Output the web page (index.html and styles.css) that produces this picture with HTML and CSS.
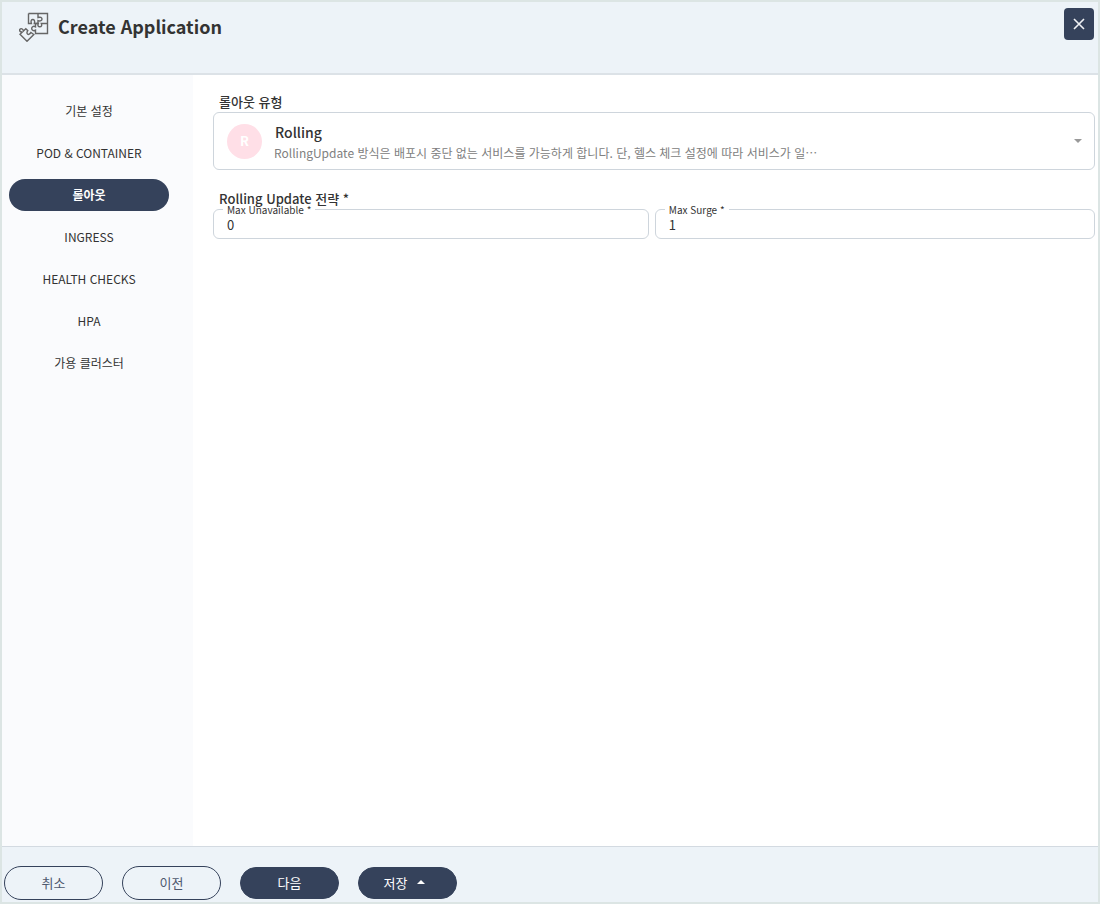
FILE: index.html
```html
<!DOCTYPE html>
<html lang="ko">
<head>
    <meta charset="UTF-8">
    <meta name="viewport" content="width=device-width, initial-scale=1">
    <title>Create Application</title>
    <link rel="stylesheet" href="styles.css">
</head>
<body>
<div class="dialog">
    <header class="dialog-header">
        <svg class="app-icon" viewBox="0 0 30 30" aria-hidden="true">
            <path d="M9.500 1.500H28.500V21.500H16.500V18.200C14.500 19.300 12.700 18.300 12.700 16.500S14.500 13.700 16.500 14.800V11.500H19.300C18.300 13.500 19.200 14.800 20.800 14.800S23.300 13.500 22.300 11.500H28.500"/>
            <path d="M9.500 1.500V11.500H12.400C11.500 9 12.400 7.500 13.800 7.500S16.200 9 15.300 11.500H19V8.600C21.400 9.500 23 8.500 23 7S21.400 4.700 19 5.500V1.500"/>
            <path d="M8 29.300L1 22.300L3.200 20.200C.8 19.800 0 18.400 1 17.200S4 16.700 4.400 19L6.800 16.700L8.800 18.700C7.600 20.400 7.800 21.500 8.700 22.200S10.700 22.100 11.900 20.500L14.800 22.500Z"/>
        </svg>
        <h1>Create Application</h1>
        <button type="button" class="close-btn" aria-label="Close">
            <svg viewBox="0 0 12 12" aria-hidden="true"><path d="M1 1L11 11M11 1L1 11"/></svg>
        </button>
    </header>

    <div class="dialog-body">
        <nav class="side-nav">
            <a href="#">기본 설정</a>
            <a href="#">POD &amp; CONTAINER</a>
            <a href="#" class="selected">롤아웃</a>
            <a href="#">INGRESS</a>
            <a href="#">HEALTH CHECKS</a>
            <a href="#">HPA</a>
            <a href="#">가용 클러스터</a>
        </nav>

        <main class="content">
            <label class="section-title" for="rollout-type">롤아웃 유형</label>
            <div class="type-box">
                <select id="rollout-type">
                    <option>Rolling</option>
                </select>
                <div class="type-info">
                    <span class="avatar">R</span>
                    <p>RollingUpdate 방식은 배포시 중단 없는 서비스를 가능하게 합니다. 단, 헬스 체크 설정에 따라 서비스가 일…</p>
                    <svg class="caret" viewBox="0 0 8 4" aria-hidden="true"><path d="M0 0H8L4 4Z"/></svg>
                </div>
            </div>

            <h2 class="section-title">Rolling Update 전략 *</h2>
            <div class="field-row">
                <div class="field">
                    <label for="max-unavailable">Max Unavailable *</label>
                    <input type="text" id="max-unavailable" value="0">
                </div>
                <div class="field">
                    <label for="max-surge">Max Surge *</label>
                    <input type="text" id="max-surge" value="1">
                </div>
            </div>
        </main>
    </div>

    <footer class="dialog-footer">
        <button type="button" class="btn">취소</button>
        <button type="button" class="btn">이전</button>
        <button type="button" class="btn btn-fill">다음</button>
        <button type="button" class="btn btn-fill btn-menu">저장
            <svg class="caret" viewBox="0 0 8 4" aria-hidden="true"><path d="M0 4H8L4 0Z"/></svg>
        </button>
    </footer>
</div>
</body>
</html>
```

FILE: styles.css
```css
*{
    margin: 0;
    padding: 0;
    box-sizing: border-box;
}
body{
    font-family: "Noto Sans CJK KR", sans-serif;
    font-size: 12px;
    color: #333;
    background: #fff;
}
button, input, select{
    font-family: inherit;
    color: inherit;
}
a{
    color: inherit;
    text-decoration: none;
}
.dialog{
    display: flex;
    flex-direction: column;
    min-height: 100vh;
    border: 2px solid #dce5e4;
}

/* header */
.dialog-header{
    display: flex;
    align-items: flex-start;
    padding: 6px 4px 31px 17px;
    background: #edf3f8;
    border-bottom: 2px solid #dce2e7;
}
.app-icon{
    width: 30px;
    height: 30px;
    margin: 4px 9px 0 0;
    fill: none;
    stroke: #666;
    stroke-width: 1.4;
}
.dialog-header h1{
    flex: 1;
    margin-top: 3px;
    font-size: 18px;
    line-height: 30px;
    font-weight: 700;
}
.close-btn{
    display: flex;
    align-items: center;
    justify-content: center;
    width: 30px;
    height: 32px;
    border: none;
    border-radius: 4px;
    background: #35425b;
    cursor: pointer;
}
.close-btn svg{
    width: 12px;
    height: 12px;
    fill: none;
    stroke: #f0f2f5;
    stroke-width: 1.6;
}

/* left menu */
.dialog-body{
    flex: 1;
    display: flex;
}
.side-nav{
    display: flex;
    flex-direction: column;
    gap: 10px;
    width: 191px;
    padding: 20px 24px 20px 7px;
    background: #fafbfd;
}
.side-nav a{
    line-height: 32px;
    border-radius: 16px;
    text-align: center;
}
.side-nav .selected{
    background: #35425b;
    color: #fff;
    font-weight: 700;
}

/* form */
.content{
    flex: 1;
    min-width: 0;
    padding: 17px 3px 20px 20px;
}
.section-title{
    display: block;
    padding-left: 6px;
    font-size: 13px;
    line-height: 20px;
    font-weight: 500;
}
.type-box{
    display: grid;
    margin-bottom: 19px;
}
.type-box select, .type-info{
    grid-area: 1 / 1;
}
.type-box select{
    appearance: none;
    height: 58px;
    padding: 0 40px 18px 61px;
    border: 1px solid #ced5dc;
    border-radius: 6px;
    background: #fff;
    font-size: 14px;
    font-weight: 500;
}
.type-info{
    display: flex;
    align-items: center;
    gap: 12px;
    padding: 0 13px 0 14px;
    pointer-events: none;
}
.type-info p{
    flex: 1;
    padding-top: 24px;
    line-height: 20px;
    color: #808080;
}
.avatar{
    width: 35px;
    height: 35px;
    line-height: 34px;
    border-radius: 50%;
    background: #ffdfe7;
    color: #fff;
    font-size: 13px;
    font-weight: 700;
    text-align: center;
}
.caret{
    width: 8px;
    height: 4px;
    fill: #999;
}
.field-row{
    display: grid;
    grid-template-columns: 99fr 100fr;
    gap: 6px;
}
.field{
    position: relative;
}
.field label{
    position: absolute;
    top: -6px;
    left: 10px;
    padding: 0 4px;
    background: linear-gradient(#fff, #fff) 0 6px / 100% 2px no-repeat;
    font-size: 10px;
    line-height: 14px;
}
.field input{
    display: block;
    width: 100%;
    height: 30px;
    padding: 1px 13px;
    border: 1px solid #ced5dc;
    border-radius: 6px;
    background: #fff;
    font-size: 13px;
}

/* bottom buttons */
.dialog-footer{
    display: flex;
    align-items: center;
    gap: 19px;
    padding: 19px 2px 2px;
    background: #edf3f8;
    border-top: 1px solid #d3dae1;
}
.btn{
    width: 99px;
    height: 34px;
    padding-bottom: 2px;
    border: 1px solid #35425b;
    border-radius: 17px;
    background: transparent;
    color: #4d586e;
    font-size: 13px;
    cursor: pointer;
}
.btn-fill{
    display: flex;
    align-items: center;
    justify-content: center;
    gap: 10px;
    height: 32px;
    background: #35425b;
    color: #fff;
}
.btn-menu{
    padding-right: 6px;
}
.btn-fill .caret{
    fill: #fff;
}
```
